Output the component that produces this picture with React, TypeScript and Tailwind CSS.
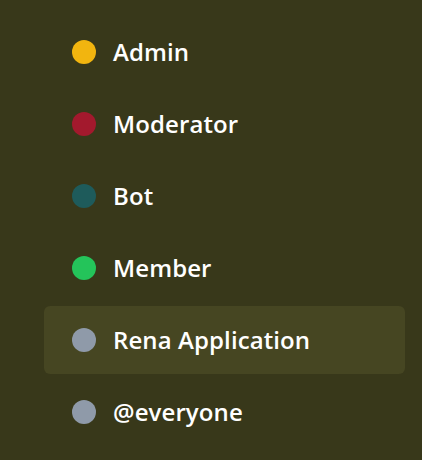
import React from 'react';

const roles = [
  { name: 'Admin', color: 'bg-[#f2b50f]' },
  { name: 'Moderator', color: 'bg-[#a3192d]' },
  { name: 'Bot', color: 'bg-[#1e5b5b]' },
  { name: 'Member', color: 'bg-[#24c45a]' },
  { name: 'Rena Application', color: 'bg-[#8f9aa9]', active: true },
  { name: '@everyone', color: 'bg-[#8f9aa9]' },
];

const App: React.FC = () => {
  return (
    <div className="w-[422px] h-[460px] bg-[#38381a] pt-[18px] pl-[44px] pr-[17px]" style={{ fontFamily: '"Open Sans", sans-serif' }}>
      {roles.map((role) => (
        <div
          key={role.name}
          className={`flex items-center h-[68px] mb-[4px] pl-[28px] rounded-md ${role.active ? 'bg-[#464622]' : ''}`}
        >
          <span className={`w-6 h-6 rounded-full ${role.color}`} />
          <span className="ml-[17px] text-[24px] font-semibold text-white leading-none tracking-[0.1px]">{role.name}</span>
        </div>
      ))}
    </div>
  );
};

export default App;
